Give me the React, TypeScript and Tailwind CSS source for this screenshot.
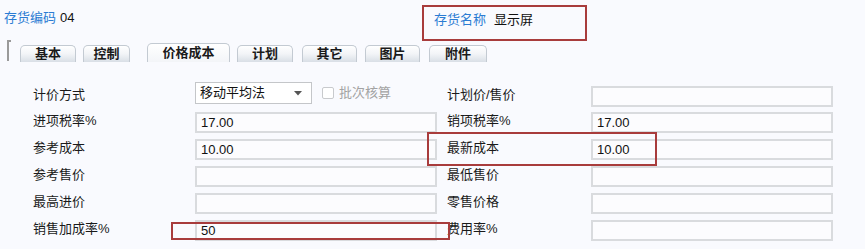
import React from 'react';

const font = { fontFamily: '"Liberation Sans", "Noto Sans CJK SC", sans-serif' };

const tabs = [
  { label: '基本', w: 56, ml: 13 },
  { label: '控制', w: 47, ml: 7 },
  { label: '价格成本', w: 83, ml: 17, active: true },
  { label: '计划', w: 56, ml: 7 },
  { label: '其它', w: 55, ml: 9 },
  { label: '图片', w: 55, ml: 8 },
  { label: '附件', w: 58, ml: 9 },
];

const rows = [
  { left: '进项税率%', lv: '17.00', right: '销项税率%', rv: '17.00' },
  { left: '参考成本', lv: '10.00', right: '最新成本', rv: '10.00' },
  { left: '参考售价', lv: '', right: '最低售价', rv: '' },
  { left: '最高进价', lv: '', right: '零售价格', rv: '' },
  { left: '销售加成率%', lv: '50', right: '费用率%', rv: '' },
];

const Field = ({ value }: { value: string }) => (
  <div className="w-[242px] h-[21px] border-2 border-[#d9dbde] bg-[#fcfcfe] flex items-center pl-[4px] text-[13px] text-[#111]">
    {value}
  </div>
);

const Label = ({ text, w }: { text: string; w: number }) => (
  <div className="mb-[4px] text-[13px] text-[#1a1a1a] leading-[16px]" style={{ width: w }}>
    {text}
  </div>
);

export default function App() {
  return (
    <div className="relative w-[865px] h-[249px] overflow-hidden bg-[#f9fafe]" style={font}>
      {/* header */}
      <div className="flex h-[40px]">
        <div className="pl-[4px] pt-[10px] text-[13px] leading-[16px] w-[422px]">
          <span className="text-[#2b7cd3]">存货编码</span>
          <span className="ml-[4px] text-[#111]">04</span>
        </div>
        <div className="mt-[5px] w-[165px] h-[36px] border-2 border-[#a83c3c] pl-[10px] pt-[5px] text-[13px] leading-[16px]">
          <span className="text-[#2b7cd3]">存货名称</span>
          <span className="ml-[8px] text-[#111]">显示屏</span>
        </div>
      </div>

      {/* tabs */}
      <div className="flex items-end h-[22px]">
        <div className="ml-[7px] self-start w-[4px] h-[21px] border-l-2 border-t-2 border-[#9a9a9a]" />
        {tabs.map((t) => (
          <div
            key={t.label}
            className={
              t.active
                ? 'h-[19px] rounded-t-[5px] border border-b-0 border-[#c3cad2] bg-gradient-to-b from-white to-[#f3f5f8] flex items-center justify-center text-[13px] font-bold text-[#1a1a1a]'
                : 'h-[17px] rounded-t-[5px] border border-b-0 border-[#c3cad2] bg-gradient-to-b from-white via-[#f2f4f7] to-[#d9dfe6] flex items-center justify-center text-[13px] font-bold text-[#1a1a1a]'
            }
            style={{ width: t.w, marginLeft: t.ml - (t.label === '基本' ? 4 : 0) }}
          >
            {t.label}
          </div>
        ))}
      </div>

      {/* form */}
      <div className="mt-[22px] flex flex-col">
        <div className="flex items-center h-[25px] pl-[33px]">
          <Label text="计价方式" w={162} />
          <div className="w-[252px] self-start -mt-[2px] flex items-center">
            <div className="w-[117px] h-[22px] border border-[#c4c6c9] bg-white flex items-center pl-[4px] text-[13px] text-[#111]">
              <span className="flex-1">移动平均法</span>
              <svg width="8" height="5" viewBox="0 0 8 5" className="mr-[9px]">
                <path d="M0 0 L8 0 L4 4.5 Z" fill="#555" />
              </svg>
            </div>
            <div className="ml-[10px] w-[12px] h-[12px] border border-[#c8cacd] rounded-[2px] bg-white" />
            <span className="ml-[5px] text-[13px] text-[#a3a3a3]">批次核算</span>
          </div>
          <Label text="计划价/售价" w={144} />
          <Field value="" />
        </div>
        {rows.map((r) => (
          <div key={r.left} className="flex items-center h-[27px] pl-[33px]">
            <Label text={r.left} w={162} />
            <Field value={r.lv} />
            <div className="w-[10px]" />
            <Label text={r.right} w={144} />
            <Field value={r.rv} />
          </div>
        ))}
      </div>

      {/* annotation boxes */}
      <div className="absolute left-[427px] top-[132px] w-[230px] h-[34px] border-2 border-[#a83c3c]" />
      <div className="absolute left-[171px] top-[222px] w-[279px] h-[18px] border-2 border-[#a83c3c]" />
    </div>
  );
}
